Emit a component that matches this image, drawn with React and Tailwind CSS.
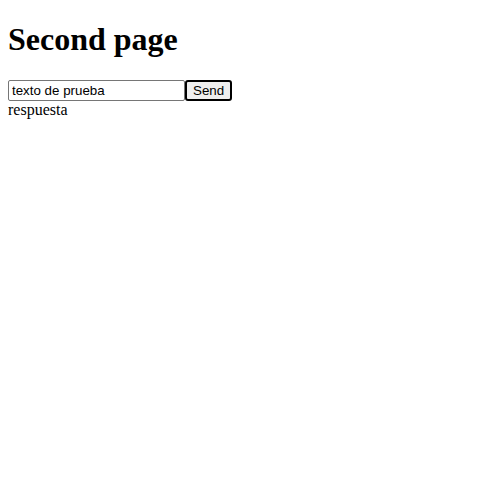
export default function App() {
  return (
    <div className="p-2 font-['Liberation_Serif',serif] text-black bg-white min-h-[500px]">
      <h1 className="text-[32px] font-bold leading-[36.8px] mt-[13.44px] mb-[21.44px]">Second page</h1>
      <div className="flex items-center h-[21px]">
        <input
          defaultValue="texto de prueba"
          className="w-[177px] h-[21px] border border-[#767676] rounded-[2px] px-[3px] text-[13.33px] font-['Liberation_Sans',Arial,sans-serif] outline-none"
        />
        <button className="h-[21px] px-[6px] border-2 border-black rounded-[3px] bg-[#efefef] text-[13.33px] leading-none font-['Liberation_Sans',Arial,sans-serif]">
          Send
        </button>
      </div>
      <div className="text-[16px] leading-[18.4px]">respuesta</div>
    </div>
  );
}
